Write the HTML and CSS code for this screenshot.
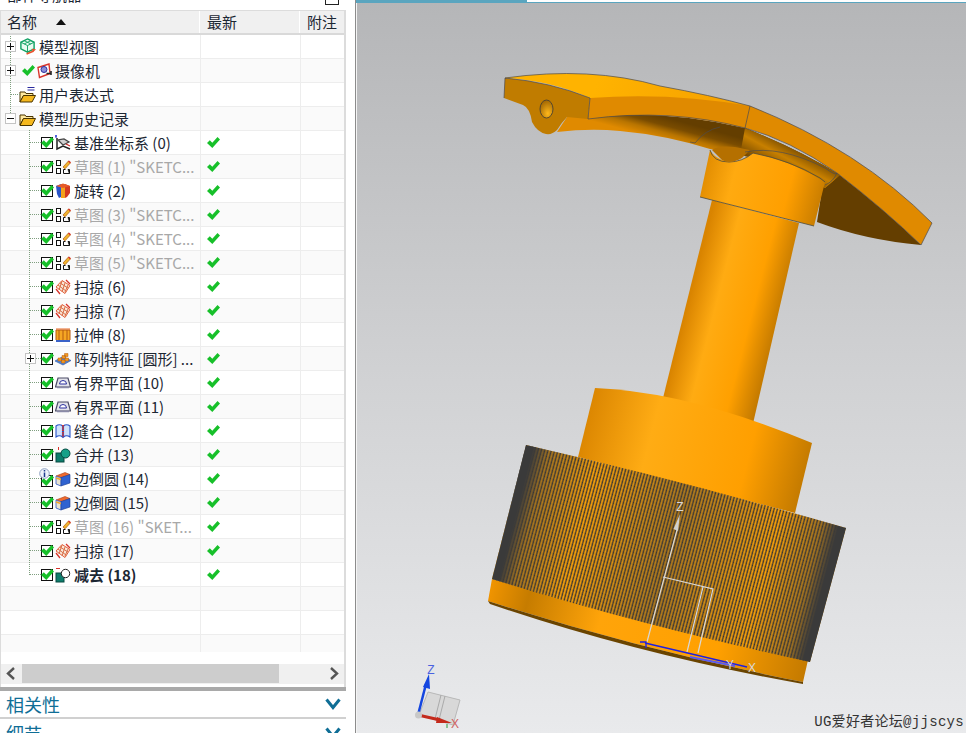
FILE: index.html
```html
<!DOCTYPE html>
<html lang="zh">
<head>
<meta charset="utf-8">
<title>部件导航器</title>
<link rel="stylesheet" href="styles.css">
</head>
<body>
<svg class="defs" width="0" height="0" aria-hidden="true">
  <symbol id="i-view" viewBox="0 0 18 18">
    <path d="M9 1l7 3.500v7l-7 3.500-7-3.500v-7z" fill="#e8fbf1" stroke="#12a164" stroke-width="1.500"/>
    <path d="M2 4.500l7 3.500 7-3.500M9 8v7M5.500 2.800l7 3.500M12.500 2.800l-7 3.500" fill="none" stroke="#12a164"/>
    <path d="M8 17l7-3" stroke="#e8502a" stroke-width="1.600"/><path d="M18 12l-4.500-.5 1.500 3.500z" fill="#e8502a"/>
  </symbol>
  <symbol id="i-cam" viewBox="0 0 16 16">
    <path d="M1 4.500l11-3.500 1 9.500-10.500 4z" fill="#fff" stroke="#d9342b" stroke-width="1.400"/>
    <circle cx="7" cy="6.500" r="3" fill="#8a8fd8" stroke="#2b2f9e"/>
    <path d="M9.500 10.500h5M14 8v4" stroke="#222" stroke-width="1.600"/>
  </symbol>
  <symbol id="i-folder" viewBox="0 0 17 17">
    <path d="M1 5h5l1 1.500h7v2H4.500L1 15z" fill="#ffe9a0" stroke="#4a3500"/>
    <path d="M1 15.500l3.500-7h12l-3.500 7z" fill="#f5b81e" stroke="#4a3500"/>
  </symbol>
  <symbol id="i-expr" viewBox="0 0 17 17">
    <path d="M1 6h5l1 1.500h7v2H4.500L1 16z" fill="#ffe9a0" stroke="#4a3500"/>
    <path d="M1 16l3.500-6.500h12L13 16z" fill="#f5b81e" stroke="#4a3500"/>
    <path d="M8.500 1.500h7M8.500 4h7" stroke="#2a2a9e"/>
  </symbol>
  <symbol id="i-csys" viewBox="0 0 16 16">
    <path d="M2 3v11l6-3 7 3" fill="none" stroke="#222" stroke-width="1.500"/>
    <path d="M3 5l5 5 6-3-5-3z" fill="#d0d0d0" stroke="#444" stroke-width="1.200"/>
    <path d="M1 0v3M0 1h2" stroke="#1a2bd0"/><path d="M11 9l4 2" stroke="#d02020" stroke-width="1.200"/>
  </symbol>
  <symbol id="i-sketch" viewBox="0 0 16 16">
    <g fill="#fff" stroke="#111">
      <rect x="1.500" y="1.500" width="4" height="5"/><rect x="1.500" y="9.500" width="4" height="5"/>
      <path d="M8.500 14.500v-4h2M13 10.500h1.500v4z"/>
    </g>
    <path d="M8.500 14.500h6" stroke="#111" fill="none"/>
    <path d="M8 8l5.500-6 2 1.800-5.500 6z" fill="#f2b52c" stroke="#b5651d" stroke-width=".8"/>
    <path d="M13.500 2l2 1.800" stroke="#d9342b" stroke-width="1.500"/>
  </symbol>
  <symbol id="i-revolve" viewBox="0 0 16 16">
    <path d="M1 3l5-2v13l-2 1-2-4z" fill="#2a55c8"/><path d="M6 1h4v14H6z" fill="#f4a21c"/>
    <path d="M10 1l5 2v7l-3 4-2 1z" fill="#d43a22"/><path d="M1 3l7-2.500L15 3 8 5z" fill="#e65a2a"/>
  </symbol>
  <symbol id="i-sweep" viewBox="0 0 16 16">
    <path d="M1 8l6-6.500 8 5-5 8z" fill="#f8e6d8" stroke="#e4603a"/>
    <path d="M3 6l8 6M5 4l8 5M7 2l-3 9M10 4l-3 9M13 6l-3 7" stroke="#d9704a" fill="none"/>
    <path d="M1 10l4 5M11 1l4 4" stroke="#d9342b" stroke-width="1.300"/>
  </symbol>
  <symbol id="i-extrude" viewBox="0 0 16 16">
    <path d="M1 3h14v10H1z" fill="#f6a623"/><path d="M1 13h14v2H1z" fill="#3a62c8"/>
    <path d="M1 3h14M4 3v10M8 3v10M12 3v10M1 3v10M15 3v10" stroke="#b55a10" fill="none"/>
    <path d="M1 2h14" stroke="#e66a2a"/>
  </symbol>
  <symbol id="i-pattern" viewBox="0 0 16 16">
    <path d="M0 10l8-4.500 8 4-8 4.500z" fill="#4f86d8" stroke="#2a55a8" stroke-width=".6"/>
    <path d="M3 7h3.500v3H3zM7 4.500h3.500v3H7zM10 7h3.500v3H10zM6.500 9h3.500v3H6.500zM9.500 2.500H13v3H9.500z" fill="#f29a1f" stroke="#b55a10" stroke-width=".5"/>
  </symbol>
  <symbol id="i-bplane" viewBox="0 0 16 16">
    <path d="M3 3h10l2.500 9H.5z" fill="#e3e3ea" stroke="#4c4c66" stroke-width="1.200"/>
    <path d="M4.500 9a3.500 3.500 0 0 1 7 0z" fill="#fff" stroke="#2a2f9e"/><path d="M2 12.500h12" stroke="#8a8aa8" stroke-width="1.500"/>
  </symbol>
  <symbol id="i-sew" viewBox="0 0 16 16">
    <path d="M1 3c2-1.500 5-1.500 6.500 0v11C6 12.500 3 12.500 1 14z" fill="#cfe2fb" stroke="#2a55c8" stroke-width="1.100"/>
    <path d="M15 3c-2-1.500-5-1.500-6.500 0v11c1.500-1.500 4.500-1.500 6.500 0z" fill="#cfe2fb" stroke="#2a55c8" stroke-width="1.100"/>
    <path d="M8 2v12" stroke="#d9342b" stroke-width="1.800" stroke-dasharray="1.500 .8"/>
  </symbol>
  <symbol id="i-unite" viewBox="0 0 16 16">
    <path d="M3 0h1v3H3z" fill="#d9342b"/>
    <rect x="1" y="6" width="8" height="9" fill="#0e7d6d" stroke="#064a40"/>
    <circle cx="10.500" cy="6.500" r="4.500" fill="#15a088" stroke="#064a40"/>
  </symbol>
  <symbol id="i-subtract" viewBox="0 0 16 16">
    <path d="M1 1h4v1H1z" fill="#d9342b"/>
    <rect x="1" y="6" width="8" height="9" fill="#0e7d6d" stroke="#064a40"/>
    <circle cx="10.500" cy="6.500" r="4.200" fill="#fff" stroke="#222"/>
  </symbol>
  <symbol id="i-blend" viewBox="0 0 16 16">
    <path d="M1 5l9-3.500 5 2-9 3.500z" fill="#f06a2c" stroke="#a8401a" stroke-width=".6"/>
    <path d="M1 5c0 0 1 1 5 1.500V15l-5-2z" fill="#e9e3d0" stroke="#2a55c8" stroke-width=".8"/>
    <path d="M6 6.500l9-3V12l-9 3z" fill="#2f62d0" stroke="#1d3d90" stroke-width=".6"/>
    <path d="M1 7l5 1.500" stroke="#f2a52c" stroke-width="1.500"/>
  </symbol>
  <symbol id="i-info" viewBox="0 0 11 11">
    <circle cx="5.500" cy="5.500" r="4.800" fill="#eef2fa" stroke="#8ea0c0"/>
    <path d="M5.500 2v1.500M5.500 4.500V9" stroke="#1b3a8c" stroke-width="1.500"/>
  </symbol>
  <symbol id="i-tick" viewBox="0 0 13 13">
    <path d="M0 7l2.800-2.800L5.300 6.700 10.500 1 13 3.500 5.300 12z" fill="#17c02a"/>
  </symbol>
</svg>

<aside class="nav">
  <div class="nav-title"><span class="nav-title-text">部件导航器</span><span class="nav-title-box"></span></div>
  <div class="tree-box">
    <div class="head">
      <div class="head-cell head-name">名称<span class="sort"></span></div>
      <div class="head-cell">最新</div>
      <div class="head-cell">附注</div>
    </div>
    <div class="rows">
      <div class="row"><div class="name top line-full"><span class="exp plus"></span><svg class="ic-top"><use href="#i-view"/></svg><span class="lbl">模型视图</span></div><div class="cell"></div><div class="cell"></div></div>
      <div class="row"><div class="name top line-full"><span class="exp plus"></span><svg class="tick-top"><use href="#i-tick"/></svg><svg class="ic-cam"><use href="#i-cam"/></svg><span class="lbl">摄像机</span></div><div class="cell"></div><div class="cell"></div></div>
      <div class="row"><div class="name top line-full stubbed"><span class="exp-none"></span><svg class="ic-top"><use href="#i-expr"/></svg><span class="lbl">用户表达式</span></div><div class="cell"></div><div class="cell"></div></div>
      <div class="row"><div class="name top line-half"><span class="exp minus"></span><svg class="ic-top"><use href="#i-folder"/></svg><span class="lbl">模型历史记录</span></div><div class="cell"></div><div class="cell"></div></div>

      <div class="row"><div class="name sub"><span class="cb"><svg><use href="#i-tick"/></svg></span><svg class="ic"><use href="#i-csys"/></svg><span class="lbl">基准坐标系 (0)</span></div><div class="cell"><svg class="ok"><use href="#i-tick"/></svg></div><div class="cell"></div></div>
      <div class="row"><div class="name sub"><span class="cb"><svg><use href="#i-tick"/></svg></span><svg class="ic"><use href="#i-sketch"/></svg><span class="lbl dim">草图 (1) "SKETC...</span></div><div class="cell"><svg class="ok"><use href="#i-tick"/></svg></div><div class="cell"></div></div>
      <div class="row"><div class="name sub"><span class="cb"><svg><use href="#i-tick"/></svg></span><svg class="ic"><use href="#i-revolve"/></svg><span class="lbl">旋转 (2)</span></div><div class="cell"><svg class="ok"><use href="#i-tick"/></svg></div><div class="cell"></div></div>
      <div class="row"><div class="name sub"><span class="cb"><svg><use href="#i-tick"/></svg></span><svg class="ic"><use href="#i-sketch"/></svg><span class="lbl dim">草图 (3) "SKETC...</span></div><div class="cell"><svg class="ok"><use href="#i-tick"/></svg></div><div class="cell"></div></div>
      <div class="row"><div class="name sub"><span class="cb"><svg><use href="#i-tick"/></svg></span><svg class="ic"><use href="#i-sketch"/></svg><span class="lbl dim">草图 (4) "SKETC...</span></div><div class="cell"><svg class="ok"><use href="#i-tick"/></svg></div><div class="cell"></div></div>
      <div class="row"><div class="name sub"><span class="cb"><svg><use href="#i-tick"/></svg></span><svg class="ic"><use href="#i-sketch"/></svg><span class="lbl dim">草图 (5) "SKETC...</span></div><div class="cell"><svg class="ok"><use href="#i-tick"/></svg></div><div class="cell"></div></div>
      <div class="row"><div class="name sub"><span class="cb"><svg><use href="#i-tick"/></svg></span><svg class="ic"><use href="#i-sweep"/></svg><span class="lbl">扫掠 (6)</span></div><div class="cell"><svg class="ok"><use href="#i-tick"/></svg></div><div class="cell"></div></div>
      <div class="row"><div class="name sub"><span class="cb"><svg><use href="#i-tick"/></svg></span><svg class="ic"><use href="#i-sweep"/></svg><span class="lbl">扫掠 (7)</span></div><div class="cell"><svg class="ok"><use href="#i-tick"/></svg></div><div class="cell"></div></div>
      <div class="row"><div class="name sub"><span class="cb"><svg><use href="#i-tick"/></svg></span><svg class="ic"><use href="#i-extrude"/></svg><span class="lbl">拉伸 (8)</span></div><div class="cell"><svg class="ok"><use href="#i-tick"/></svg></div><div class="cell"></div></div>
      <div class="row"><div class="name sub"><span class="exp plus exp-sub"></span><span class="cb"><svg><use href="#i-tick"/></svg></span><svg class="ic"><use href="#i-pattern"/></svg><span class="lbl">阵列特征 [圆形] ...</span></div><div class="cell"><svg class="ok"><use href="#i-tick"/></svg></div><div class="cell"></div></div>
      <div class="row"><div class="name sub"><span class="cb"><svg><use href="#i-tick"/></svg></span><svg class="ic"><use href="#i-bplane"/></svg><span class="lbl">有界平面 (10)</span></div><div class="cell"><svg class="ok"><use href="#i-tick"/></svg></div><div class="cell"></div></div>
      <div class="row"><div class="name sub"><span class="cb"><svg><use href="#i-tick"/></svg></span><svg class="ic"><use href="#i-bplane"/></svg><span class="lbl">有界平面 (11)</span></div><div class="cell"><svg class="ok"><use href="#i-tick"/></svg></div><div class="cell"></div></div>
      <div class="row"><div class="name sub"><span class="cb"><svg><use href="#i-tick"/></svg></span><svg class="ic"><use href="#i-sew"/></svg><span class="lbl">缝合 (12)</span></div><div class="cell"><svg class="ok"><use href="#i-tick"/></svg></div><div class="cell"></div></div>
      <div class="row"><div class="name sub"><span class="cb"><svg><use href="#i-tick"/></svg></span><svg class="ic"><use href="#i-unite"/></svg><span class="lbl">合并 (13)</span></div><div class="cell"><svg class="ok"><use href="#i-tick"/></svg></div><div class="cell"></div></div>
      <div class="row"><div class="name sub"><svg class="info"><use href="#i-info"/></svg><span class="cb cb-low"><svg><use href="#i-tick"/></svg></span><svg class="ic"><use href="#i-blend"/></svg><span class="lbl">边倒圆 (14)</span></div><div class="cell"><svg class="ok"><use href="#i-tick"/></svg></div><div class="cell"></div></div>
      <div class="row"><div class="name sub"><span class="cb"><svg><use href="#i-tick"/></svg></span><svg class="ic"><use href="#i-blend"/></svg><span class="lbl">边倒圆 (15)</span></div><div class="cell"><svg class="ok"><use href="#i-tick"/></svg></div><div class="cell"></div></div>
      <div class="row"><div class="name sub"><span class="cb"><svg><use href="#i-tick"/></svg></span><svg class="ic"><use href="#i-sketch"/></svg><span class="lbl dim">草图 (16) "SKET...</span></div><div class="cell"><svg class="ok"><use href="#i-tick"/></svg></div><div class="cell"></div></div>
      <div class="row"><div class="name sub"><span class="cb"><svg><use href="#i-tick"/></svg></span><svg class="ic"><use href="#i-sweep"/></svg><span class="lbl">扫掠 (17)</span></div><div class="cell"><svg class="ok"><use href="#i-tick"/></svg></div><div class="cell"></div></div>
      <div class="row"><div class="name sub last"><span class="cb"><svg><use href="#i-tick"/></svg></span><svg class="ic"><use href="#i-subtract"/></svg><span class="lbl strong">减去 (18)</span></div><div class="cell"><svg class="ok"><use href="#i-tick"/></svg></div><div class="cell"></div></div>

      <div class="row"><div class="name"></div><div class="cell"></div><div class="cell"></div></div>
      <div class="row"><div class="name"></div><div class="cell"></div><div class="cell"></div></div>
      <div class="row row-cut"><div class="name"></div><div class="cell"></div><div class="cell"></div></div>
    </div>
    <div class="hscroll">
      <svg class="arrow" viewBox="0 0 20 19"><path d="M13 4l-6 5.500 6 5.500" fill="none" stroke="#555" stroke-width="2.400"/></svg>
      <div class="track"><div class="thumb"></div></div>
      <svg class="arrow" viewBox="0 0 20 19"><path d="M7 4l6 5.500-6 5.500" fill="none" stroke="#555" stroke-width="2.400"/></svg>
    </div>
  </div>
  <div class="section"><span>相关性</span><svg class="chev" viewBox="0 0 16 12"><path d="M1.500 1.500L8 9.500l6.500-8" fill="none" stroke="#0f6e96" stroke-width="3"/></svg></div>
  <div class="section"><span>细节</span><svg class="chev" viewBox="0 0 16 12"><path d="M1.500 1.500L8 9.500l6.500-8" fill="none" stroke="#0f6e96" stroke-width="3"/></svg></div>
</aside>

<main class="view">
  <div class="progress"><div class="progress-on"></div></div>
  <svg class="scene" viewBox="356 3 610 730" xmlns="http://www.w3.org/2000/svg">
    <defs>
      <linearGradient id="g-shaft" gradientUnits="userSpaceOnUse" x1="663" y1="400" x2="752" y2="423">
        <stop offset="0" stop-color="#d98400"/><stop offset=".3" stop-color="#ffab12"/><stop offset=".7" stop-color="#ffa000"/><stop offset="1" stop-color="#c47a00"/>
      </linearGradient>
      <linearGradient id="g-collar" gradientUnits="userSpaceOnUse" x1="700" y1="180" x2="822" y2="212">
        <stop offset="0" stop-color="#e08b00"/><stop offset=".25" stop-color="#ffaa10"/><stop offset=".7" stop-color="#ff9f00"/><stop offset="1" stop-color="#c47a00"/>
      </linearGradient>
      <linearGradient id="g-lower" gradientUnits="userSpaceOnUse" x1="580" y1="425" x2="810" y2="485">
        <stop offset="0" stop-color="#d98400"/><stop offset=".3" stop-color="#ffac14"/><stop offset=".72" stop-color="#ff9f00"/><stop offset="1" stop-color="#bd7600"/>
      </linearGradient>
      <linearGradient id="g-base" gradientUnits="userSpaceOnUse" x1="490" y1="590" x2="806" y2="672">
        <stop offset="0" stop-color="#f09400"/><stop offset=".12" stop-color="#c67c00"/><stop offset=".35" stop-color="#ffa40a"/><stop offset=".72" stop-color="#ffa000"/><stop offset="1" stop-color="#c47a00"/>
      </linearGradient>
      <linearGradient id="g-cap" gradientUnits="userSpaceOnUse" x1="600" y1="70" x2="740" y2="110">
        <stop offset="0" stop-color="#ffb300"/><stop offset="1" stop-color="#f5a000"/>
      </linearGradient>
      <linearGradient id="g-under" gradientUnits="userSpaceOnUse" x1="640" y1="134" x2="646" y2="112">
        <stop offset="0" stop-color="#e08a00"/><stop offset=".35" stop-color="#b87400"/><stop offset=".65" stop-color="#7a4c00"/><stop offset="1" stop-color="#643e00"/>
      </linearGradient>
      <linearGradient id="g-fillet" gradientUnits="userSpaceOnUse" x1="775" y1="170" x2="790" y2="142">
        <stop offset="0" stop-color="#7a4c00"/><stop offset=".5" stop-color="#c88000"/><stop offset="1" stop-color="#6b4300"/>
      </linearGradient>
      <radialGradient id="g-hole" cx=".6" cy=".75" r=".8">
        <stop offset="0" stop-color="#ffb81c"/><stop offset="1" stop-color="#9a6000"/>
      </radialGradient>
      <linearGradient id="g-bg" x1="0" y1="0" x2="0" y2="1">
        <stop offset="0" stop-color="#b5b6b8"/><stop offset=".5" stop-color="#d0d1d3"/><stop offset="1" stop-color="#e9eaec"/>
      </linearGradient>
      <pattern id="p-knurl" width="3.200" height="2" patternUnits="userSpaceOnUse" patternTransform="rotate(15)">
        <rect width="3.200" height="2" fill="#333"/>
        <rect x=".2" width="1.800" height="2" fill="#ffa408"/>
        <rect x="2" width=".6" height="1" fill="#a26a1a"/>
      </pattern>
      <linearGradient id="g-knurl" gradientUnits="userSpaceOnUse" x1="509" y1="512" x2="828" y2="595">
        <stop offset="0" stop-color="#3a3a3a"/><stop offset=".022" stop-color="#3a3a3a"/><stop offset=".07" stop-color="#3a3a3a" stop-opacity=".45"/><stop offset=".22" stop-color="#3a3a3a" stop-opacity="0"/><stop offset=".5" stop-color="#3a3a3a" stop-opacity=".4"/><stop offset=".8" stop-color="#3a3a3a" stop-opacity="0"/><stop offset=".93" stop-color="#3a3a3a" stop-opacity=".45"/><stop offset=".978" stop-color="#3a3a3a"/><stop offset="1" stop-color="#3a3a3a"/>
      </linearGradient>
    </defs>
    <rect x="356" y="3" width="610" height="730" fill="url(#g-bg)"/>
    <rect x="356" y="3" width="1" height="730" fill="#f4f4f4"/>

    <!-- shaft -->
    <path d="M712 200L663 398 752 428 799 223z" fill="url(#g-shaft)"/>

    <!-- big underside -->
    <path d="M823 183L837 173Q885 210 921 245Q865 240 817 222z" fill="#643e00"/>
    <!-- under sweep -->
    <path d="M567 117Q660 108 745 128Q800 150 840 175L825 188 Q790 165 740 155L710 149Q665 135 620 131 590 128 557 132z" fill="url(#g-under)"/>
    <path d="M745 128Q800 150 840 175L825 188Q790 165 740 155z" fill="url(#g-fillet)"/>
    <!-- collar -->
    <path d="M710 150L700 197 814 226 825 182Q790 160 753 153 738 165 722 160 713 156 710 150z" fill="url(#g-collar)"/>
    <path d="M710 150Q713 162 729 162 742 162 753 153Q790 160 820 178L825 182M700 197L814 226" fill="none" stroke="#4a4a40" stroke-width=".8"/>
    <path d="M712 150Q718 145 735 147L750 150 742 158Q730 165 722 160z" fill="#b57000"/>
    <path d="M745 152Q780 145 825 168 836 176 837 173 833 182 825 185" fill="none" stroke="#4a4a50" stroke-width=".7"/>
    <path d="M695 143Q705 130 720 127M695 143L690 142" fill="none" stroke="#4a4a50" stroke-width=".7"/>

    <!-- top cap -->
    <path d="M505 78Q590 66 660 86 710 95 750 106L590 98Q550 80 505 78z" fill="url(#g-cap)"/>
    <path d="M590 98Q670 92 750 106Q860 150 932 223L921 245Q885 210 837 173 790 140 745 128 660 108 588 119z" fill="#e08a00"/>
    <path d="M505 78Q550 82 590 98L588 119 567 117Q562 122 557 130 552 135 546 134 537 132 532 122 530 108 523 105L504 98z" fill="#c07c00"/>
    <ellipse cx="546.500" cy="109" rx="6.500" ry="9" fill="url(#g-hole)" stroke="#3a3a3a" stroke-width=".8"/>
    <path d="M505 78Q550 82 590 98L588 119M504 98L505 78Q590 66 660 86 710 95 750 106Q860 150 932 223L921 245M750 106L745 128M588 119Q670 108 745 128 790 140 837 173 885 210 921 245" fill="none" stroke="#4a4a50" stroke-width=".7"/>

    <!-- lower cylinder -->
    <path d="M595 388Q690 392 812 443L795 513 578 457z" fill="url(#g-lower)"/>
    <!-- base disc -->
    <path d="M492 579L488 601Q640 650 803 682L808 660z" fill="url(#g-base)"/>
    <path d="M488 601Q640 650 803 682L803 684Q640 655 490 604z" fill="#6a4400"/>
    <!-- knurled band -->
    <path d="M526 445Q680 480 846 528L810 662Q640 625 492 579z" fill="url(#p-knurl)"/>
    <path d="M526 445Q680 480 846 528L810 662Q640 625 492 579z" fill="url(#g-knurl)"/>

    <!-- work coordinate system -->
    <g fill="none" stroke="#d8d8d8" stroke-width="1.200">
      <path d="M647 642L677 530"/>
      <path d="M663 577L713 589 698 653M703 587L687 652"/>
    </g>
    <path d="M680 514L673.500 529 678 531z" fill="#d0d0d0"/>
    <text class="axis axis-wcs" x="680" y="511">Z</text>
    <path d="M640 642H646V648M645 643L747 667" fill="none" stroke="#2020e0" stroke-width="1.300"/>
    <path d="M690 657L735 666" stroke="#5a5af0" stroke-width="2"/>
    <text class="axis axis-wcs" x="752" y="672">X</text>
    <text class="axis axis-wcs" x="730" y="669">Y</text>

    <!-- view triad -->
    <path d="M428 692L460 700 453 725 419 715z" fill="#d8d8d8" stroke="#b8b8b8"/>
    <path d="M441 695L435 719M445 696L439 720" stroke="#aaa" fill="none"/>
    <path d="M418 715L426 684" stroke="#1446e0" stroke-width="2.500"/><path d="M429 674L423 687 430 689z" fill="#1446e0"/>
    <path d="M418 715L440 720" stroke="#c42a1c" stroke-width="3"/><path d="M452 723L437 717 436 723z" fill="#c42a1c"/>
    <path d="M447 724v4" stroke="#2a9a3a"/>
    <circle cx="418.500" cy="715" r="3.500" fill="#c8c8c8"/>
    <text class="axis axis-z" x="431" y="674">Z</text>
    <text class="axis axis-x" x="455" y="728">X</text>
  </svg>
  <div class="mark">UG爱好者论坛@jjscys</div>
</main>
</body>
</html>
```
FILE: styles.css
```css
* { box-sizing: border-box; }
html, body { margin: 0; padding: 0; }
body {
  width: 966px;
  height: 733px;
  overflow: hidden;
  display: flex;
  background: #fff;
  font-family: "Noto Sans CJK SC", "Noto Sans", sans-serif;
  color: #1c2733;
}
.defs { position: absolute; }

/* navigator */
.nav { width: 346px; flex: none; height: 733px; overflow: hidden; display: flex; flex-direction: column; }
.nav-title { height: 10px; flex: none; display: flex; justify-content: space-between; align-items: flex-end; padding: 0 7px 5px 7px; }
.nav-title-text { font-size: 15px; line-height: 15px; height: 15px; flex: none; margin-bottom: 3px; }
.nav-title-box { width: 14px; height: 16px; border: 1px solid #222; flex: none; }
.tree-box { border: 1px solid #dcdcdc; border-right-width: 2px; border-bottom: 0; height: 677px; flex: none; display: flex; flex-direction: column; }
.head { display: grid; grid-template-columns: 199px 100px 1fr; height: 24px; flex: none; background: #f0f0f0; border-bottom: 2px solid #d9d9d9; }
.head-cell { font-size: 15px; line-height: 22px; padding-left: 7px; border-right: 1px solid #fff; }
.head-name { display: flex; align-items: center; padding-left: 6px; }
.head-cell:last-child { border-right: 0; }
.sort { width: 0; height: 0; margin-left: 19px; border: 5px solid transparent; border-bottom: 6px solid #111; border-top: 0; }
.rows { height: 629px; flex: none; overflow: hidden; }
.row { display: grid; grid-template-columns: 199px 100px 1fr; height: 24px; border-bottom: 1px solid #ededed; }
.row:nth-child(even) { background: #fafafa; }
.row-cut { height: 17px; border-bottom: 0; background: #fafafa; }
.cell { border-left: 1px solid #ededed; display: flex; align-items: center; padding-left: 6px; }
.ok { width: 13px; height: 13px; flex: none; }
.name { position: relative; display: flex; align-items: center; font-size: 15px; white-space: nowrap; }
.lbl { line-height: 20px; }
.dim { color: #a8a8a8; }
.strong { font-weight: 700; }

/* tree connectors */
.top { padding-left: 4px; }
.top::before { content: ""; position: absolute; left: 9px; top: -1px; bottom: -1px; border-left: 1px dotted #7f9f7f; }
.line-half::before { bottom: auto; height: 9px; }
.stubbed::after { content: ""; position: absolute; left: 9px; width: 10px; top: 11px; border-top: 1px dotted #7f9f7f; }
.sub { padding-left: 40px; }
.sub::before { content: ""; position: absolute; left: 28px; top: -1px; bottom: -1px; border-left: 1px dotted #7f9f7f; }
.sub::after { content: ""; position: absolute; left: 29px; width: 11px; top: 11px; border-top: 1px dotted #7f9f7f; }
.sub.last::before { bottom: auto; height: 13px; }

.exp, .exp-none { width: 11px; height: 11px; flex: none; position: relative; z-index: 1; }
.exp { background: #fff; border: 1px solid #c4c4c4; }
.exp::before { content: ""; position: absolute; left: 1px; right: 1px; top: 4px; height: 1px; background: #111; }
.plus::after { content: ""; position: absolute; top: 1px; bottom: 1px; left: 4px; width: 1px; background: #111; }
.exp-sub { position: absolute; left: 24px; top: 6px; }
.ic-top { width: 17px; height: 17px; margin: 0 3px 0 3px; flex: none; }
.tick-top { width: 13px; height: 13px; margin: 0 2px 0 6px; flex: none; }
.ic-cam { width: 16px; height: 16px; margin-right: 2px; flex: none; }
.ic { width: 16px; height: 16px; margin: 0 3px 0 2px; flex: none; }
.cb { width: 12px; height: 12px; border: 1px solid #111; background: #fff; flex: none; position: relative; z-index: 1; }
.cb svg { position: absolute; left: -1px; top: -2px; width: 13px; height: 13px; }
.cb-low { top: 2px; }
.info { position: absolute; left: 38px; top: 1px; width: 11px; height: 11px; z-index: 2; }

/* scrollbar */
.hscroll { height: 20px; flex: none; display: flex; background: #f0f0f0; }
.arrow { width: 20px; height: 19px; flex: none; }
.track { flex: 1; height: 19px; }
.thumb { width: 257px; height: 19px; background: #cdcdcd; margin-left: 1px; }

/* accordion */
.section { height: 30px; flex: none; display: flex; justify-content: space-between; align-items: center; padding: 0 5px 0 6px; border-top: 4px solid #a9a9a9; color: #0f6e96; font-size: 18px; line-height: 24px; }
.section + .section { border-top: 2px solid #d0d0d0; height: 30px; }
.chev { width: 16px; height: 12px; flex: none; }

/* viewport */
.view { position: relative; flex: 1; margin-left: 9px; height: 733px; border-left: 1px solid #8c8c8c; overflow: hidden; display: flex; flex-direction: column; }
.progress { height: 3px; flex: none; background: #fff; border-bottom: 1px solid #5aa5bf; }
.progress-on { width: 171px; height: 3px; background: #5aa5bf; }
.scene { display: block; width: 610px; height: 730px; flex: none; }
.axis { font-family: "Liberation Sans", sans-serif; font-size: 11px; text-anchor: middle; }
.axis-wcs { fill: #d8d8d8; font-size: 12px; }
.axis-z { fill: #4a62e0; font-size: 12px; }
.axis-x { fill: #d06060; font-size: 12px; }
.mark { position: absolute; right: 2px; bottom: 2px; color: #333; font-size: 14px; line-height: 18px; letter-spacing: .3px; font-family: "Liberation Mono", "Noto Sans CJK SC", monospace; }
```
